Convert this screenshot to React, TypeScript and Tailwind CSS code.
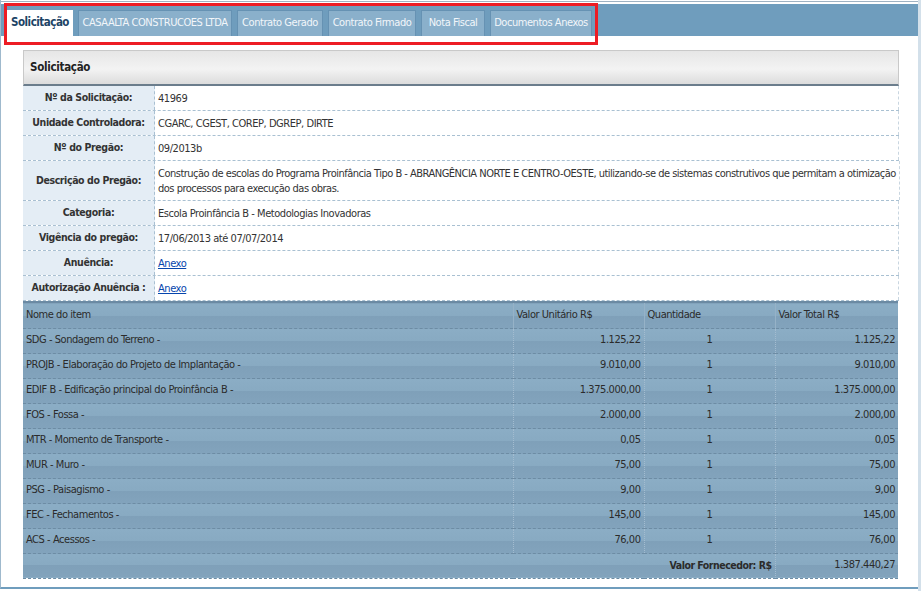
import React from 'react'

const tabs: [string, string][] = [
  ['Solicitação', 'w-[66px]'],
  ['CASAALTA CONSTRUCOES LTDA', 'w-[154px]'],
  ['Contrato Gerado', 'w-[86px]'],
  ['Contrato Firmado', 'w-[88px]'],
  ['Nota Fiscal', 'w-[64px]'],
  ['Documentos Anexos', 'w-[102px]'],
]

const info: { label: string; value: React.ReactNode; tall?: boolean }[] = [
  { label: 'Nº da Solicitação:', value: '41969' },
  { label: 'Unidade Controladora:', value: 'CGARC, CGEST, COREP, DGREP, DIRTE' },
  { label: 'Nº do Pregão:', value: '09/2013b' },
  {
    label: 'Descrição do Pregão:',
    value: (
      <span className="tracking-[-0.5px]">
        Construção de escolas do Programa Proinfância Tipo B - ABRANGÊNCIA NORTE E CENTRO-OESTE, utilizando-se de sistemas construtivos que permitam a otimização
        <br />
        dos processos para execução das obras.
      </span>
    ),
    tall: true,
  },
  { label: 'Categoria:', value: 'Escola Proinfância B - Metodologias Inovadoras' },
  { label: 'Vigência do pregão:', value: '17/06/2013 até 07/07/2014' },
  { label: 'Anuência:', value: <a className="text-[#0645ad] underline">Anexo</a> },
  { label: 'Autorização Anuência :', value: <a className="text-[#0645ad] underline">Anexo</a> },
]

const items = [
  ['SDG - Sondagem do Terreno -', '1.125,22', '1', '1.125,22'],
  ['PROJB - Elaboração do Projeto de Implantação -', '9.010,00', '1', '9.010,00'],
  ['EDIF B - Edificação principal do Proinfância B -', '1.375.000,00', '1', '1.375.000,00'],
  ['FOS - Fossa -', '2.000,00', '1', '2.000,00'],
  ['MTR - Momento de Transporte -', '0,05', '1', '0,05'],
  ['MUR - Muro -', '75,00', '1', '75,00'],
  ['PSG - Paisagismo -', '9,00', '1', '9,00'],
  ['FEC - Fechamentos -', '145,00', '1', '145,00'],
  ['ACS - Acessos -', '76,00', '1', '76,00'],
]

const rowBg = 'bg-[linear-gradient(#8badc5_0%,#88aac2_50%,#7fa0b9_50%,#82a3bc_100%)]'

export default function App() {
  return (
    <div className="flex h-[591px] w-[921px] bg-white font-['DejaVu_Sans_Condensed','DejaVu_Sans',sans-serif] text-[11px] text-[#333]">
      <div className="flex h-[589px] w-[918px] flex-col border-b-2 border-l border-[#9fb9cd] border-b-[#6f9dbd]">
        <div className="relative mt-[1px] border-t border-[#9fb2c2]">
          <div className="mt-[2px] flex h-[32px] items-end gap-[5px] bg-[#6f9dbd] pl-[6px]">
            {tabs.map(([t, w], i) =>
              i === 0 ? (
                <div key={t} className={`flex h-[26px] ${w} items-center justify-center bg-white text-[11.5px] font-bold tracking-[-0.5px] text-[#1d4466]`}>
                  {t}
                </div>
              ) : (
                <div
                  key={t}
                  className={`flex h-[26px] ${w} items-center justify-center border border-b-0 border-[#6692b3] bg-[#8ab0cb] text-[11px] tracking-[-0.45px] text-[#f2f6fa]`}
                >
                  {t}
                </div>
              )
            )}
          </div>
          <div className="absolute left-[3px] top-[1px] h-[42px] w-[594px] border-[3px] border-[#ed1c24]" />
        </div>

        <div className="ml-[22px] mt-[14px] w-[876px]">
          <div className="flex h-[36px] items-center border border-[#c9c9c9] border-b-2 border-b-[#6b7d8c] bg-[linear-gradient(#e6e6e6,#f3f3f3_55%,#dcdcdc)] px-[6px] text-[11.5px] font-bold tracking-[-0.3px] text-[#222]">
            Solicitação
          </div>
          {info.map((r) => (
            <div key={r.label} className={`flex ${r.tall ? 'h-[40px]' : 'h-[25px]'} border-b border-dashed border-[#a9c0d2]`}>
              <div className="flex w-[132px] shrink-0 items-center justify-center whitespace-nowrap border-r border-dashed border-[#a9c0d2] bg-[#e4edf5] text-[10.5px] font-bold tracking-[-0.4px] text-[#333]">
                {r.label}
              </div>
              <div className="flex flex-1 items-center whitespace-nowrap border-r border-dashed border-[#c9d6e0] bg-white px-[3px] leading-[15px] tracking-[-0.45px]">
                <div>{r.value}</div>
              </div>
            </div>
          ))}
          <table className="w-[875px] border-collapse text-[11px] tracking-[-0.45px] text-[#2b2b2b]">
            <thead>
              <tr className={`h-[26px] ${rowBg} border-t-2 border-[#6b8aa3]`}>
                <th className="w-[490px] px-[3px] text-left font-normal">Nome do item</th>
                <th className="w-[131px] border-l border-[#96b2c7] px-[3px] text-left font-normal">Valor Unitário R$</th>
                <th className="w-[131px] border-l border-[#96b2c7] px-[3px] text-left font-normal">Quantidade</th>
                <th className="border-l border-[#96b2c7] px-[3px] text-left font-normal">Valor Total R$</th>
              </tr>
            </thead>
            <tbody>
              {items.map((r) => (
                <tr key={r[0]} className={`h-[25px] ${rowBg} border-t border-dashed border-[#6d8ca4]`}>
                  <td className="px-[3px]">{r[0]}</td>
                  <td className="border-l border-dotted border-[#a3bcd0] px-[3px] text-right">{r[1]}</td>
                  <td className="border-l border-dotted border-[#a3bcd0] px-[3px] text-center">{r[2]}</td>
                  <td className="border-l border-dotted border-[#a3bcd0] px-[3px] text-right">{r[3]}</td>
                </tr>
              ))}
              <tr className={`h-[25px] ${rowBg} border-t border-dashed border-[#6d8ca4] border-b border-b-[#6d8ca4]`}>
                <td colSpan={3} className="px-[3px] text-right text-[10.5px] font-bold tracking-[-0.5px]">
                  Valor Fornecedor: R$
                </td>
                <td className="border-l border-dotted border-[#a3bcd0] px-[3px] text-right">1.387.440,27</td>
              </tr>
            </tbody>
          </table>
        </div>
      </div>
      <div className="h-full w-[3px] bg-[#d3e0ea]" />
    </div>
  )
}
